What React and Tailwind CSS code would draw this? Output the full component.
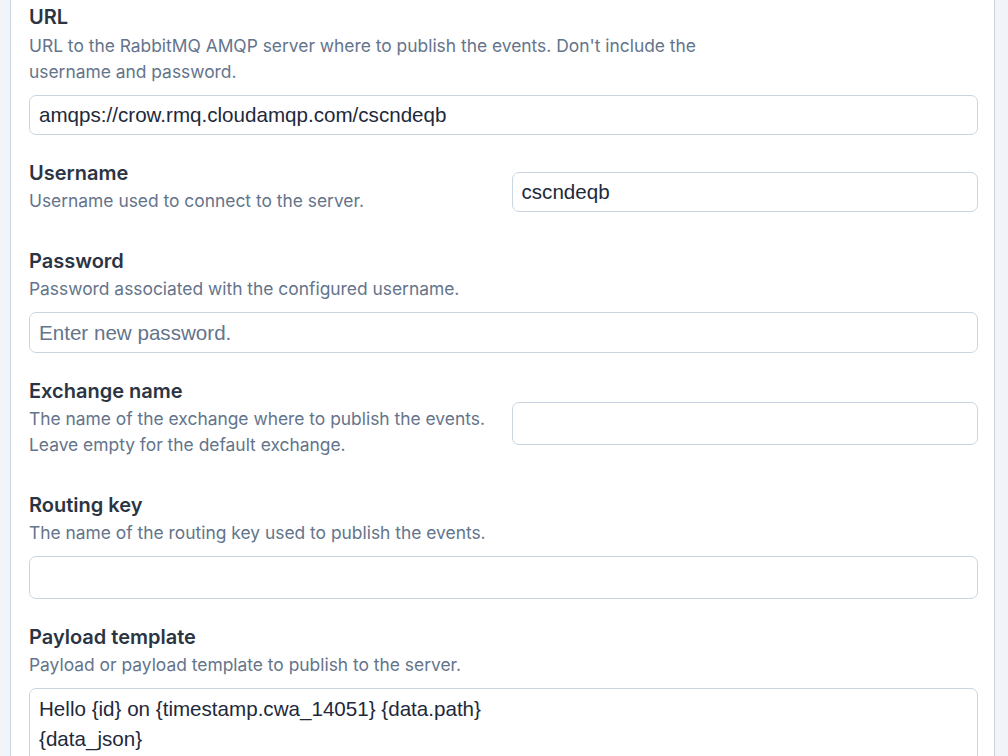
import { useState } from "react";

const labelCls = "text-[20px] leading-6 font-semibold text-[#2b3443]";
const descCls = "text-[17.4px] leading-[26px] text-[#64748b]";
const inputCls =
  "block w-full rounded-[7px] border border-[#cbd5e1] bg-white px-[9px] text-[20.6px] text-[#1e293b] placeholder:text-[#64748b] outline-none font-['Liberation_Sans',Arial,sans-serif]";

function Field({ label, desc, descClass = "mt-[3px]", children }) {
  return (
    <div>
      <div className={labelCls}>{label}</div>
      <p className={descCls + " " + descClass}>{desc}</p>
      <div className="mt-[10px]">{children}</div>
    </div>
  );
}

function SideField({ label, desc, children }) {
  return (
    <div className="grid grid-cols-2 items-center gap-[16px]">
      <div className="pb-[9px]">
        <div className={labelCls}>{label}</div>
        <p className={descCls + " mt-[3px]"}>{desc}</p>
      </div>
      <div>{children}</div>
    </div>
  );
}

export default function App() {
  const [form, setForm] = useState({
    url: "amqps://crow.rmq.cloudamqp.com/cscndeqb",
    username: "cscndeqb",
    password: "",
    exchange: "",
    routing: "",
    payload: "Hello {id} on {timestamp.cwa_14051} {data.path}\n{data_json}",
  });
  const set = (k) => (e) => setForm({ ...form, [k]: e.target.value });

  return (
    <div className="min-h-screen bg-[#f1f5f9] pl-[10px] pr-[13px] font-['Inter',sans-serif]">
      <div className="min-h-screen border-x border-[#cbd5e1] bg-white pl-[18px] pr-[16px] pt-[5px]">
        <div className="flex flex-col gap-[26px]">
          <Field
            label="URL"
            descClass="mt-1 max-w-[690px]"
            desc="URL to the RabbitMQ AMQP server where to publish the events. Don't include the username and password."
          >
            <input className={inputCls + " h-[40px]"} value={form.url} onChange={set("url")} />
          </Field>

          <SideField label="Username" desc="Username used to connect to the server.">
            <input className={inputCls + " h-[40px]"} value={form.username} onChange={set("username")} />
          </SideField>

          <Field label="Password" desc="Password associated with the configured username.">
            <input
              type="password"
              className={inputCls + " h-[41px]"}
              placeholder="Enter new password."
              value={form.password}
              onChange={set("password")}
            />
          </Field>

          <SideField
            label="Exchange name"
            desc="The name of the exchange where to publish the events. Leave empty for the default exchange."
          >
            <input className={inputCls + " h-[43px]"} value={form.exchange} onChange={set("exchange")} />
          </SideField>

          <Field label="Routing key" desc="The name of the routing key used to publish the events.">
            <input className={inputCls + " h-[43px]"} value={form.routing} onChange={set("routing")} />
          </Field>

          <Field label="Payload template" desc="Payload or payload template to publish to the server.">
            <textarea
              rows={4}
              className={inputCls + " resize-none py-[5px] leading-[30px]"}
              value={form.payload}
              onChange={set("payload")}
            />
          </Field>
        </div>
      </div>
    </div>
  );
}
